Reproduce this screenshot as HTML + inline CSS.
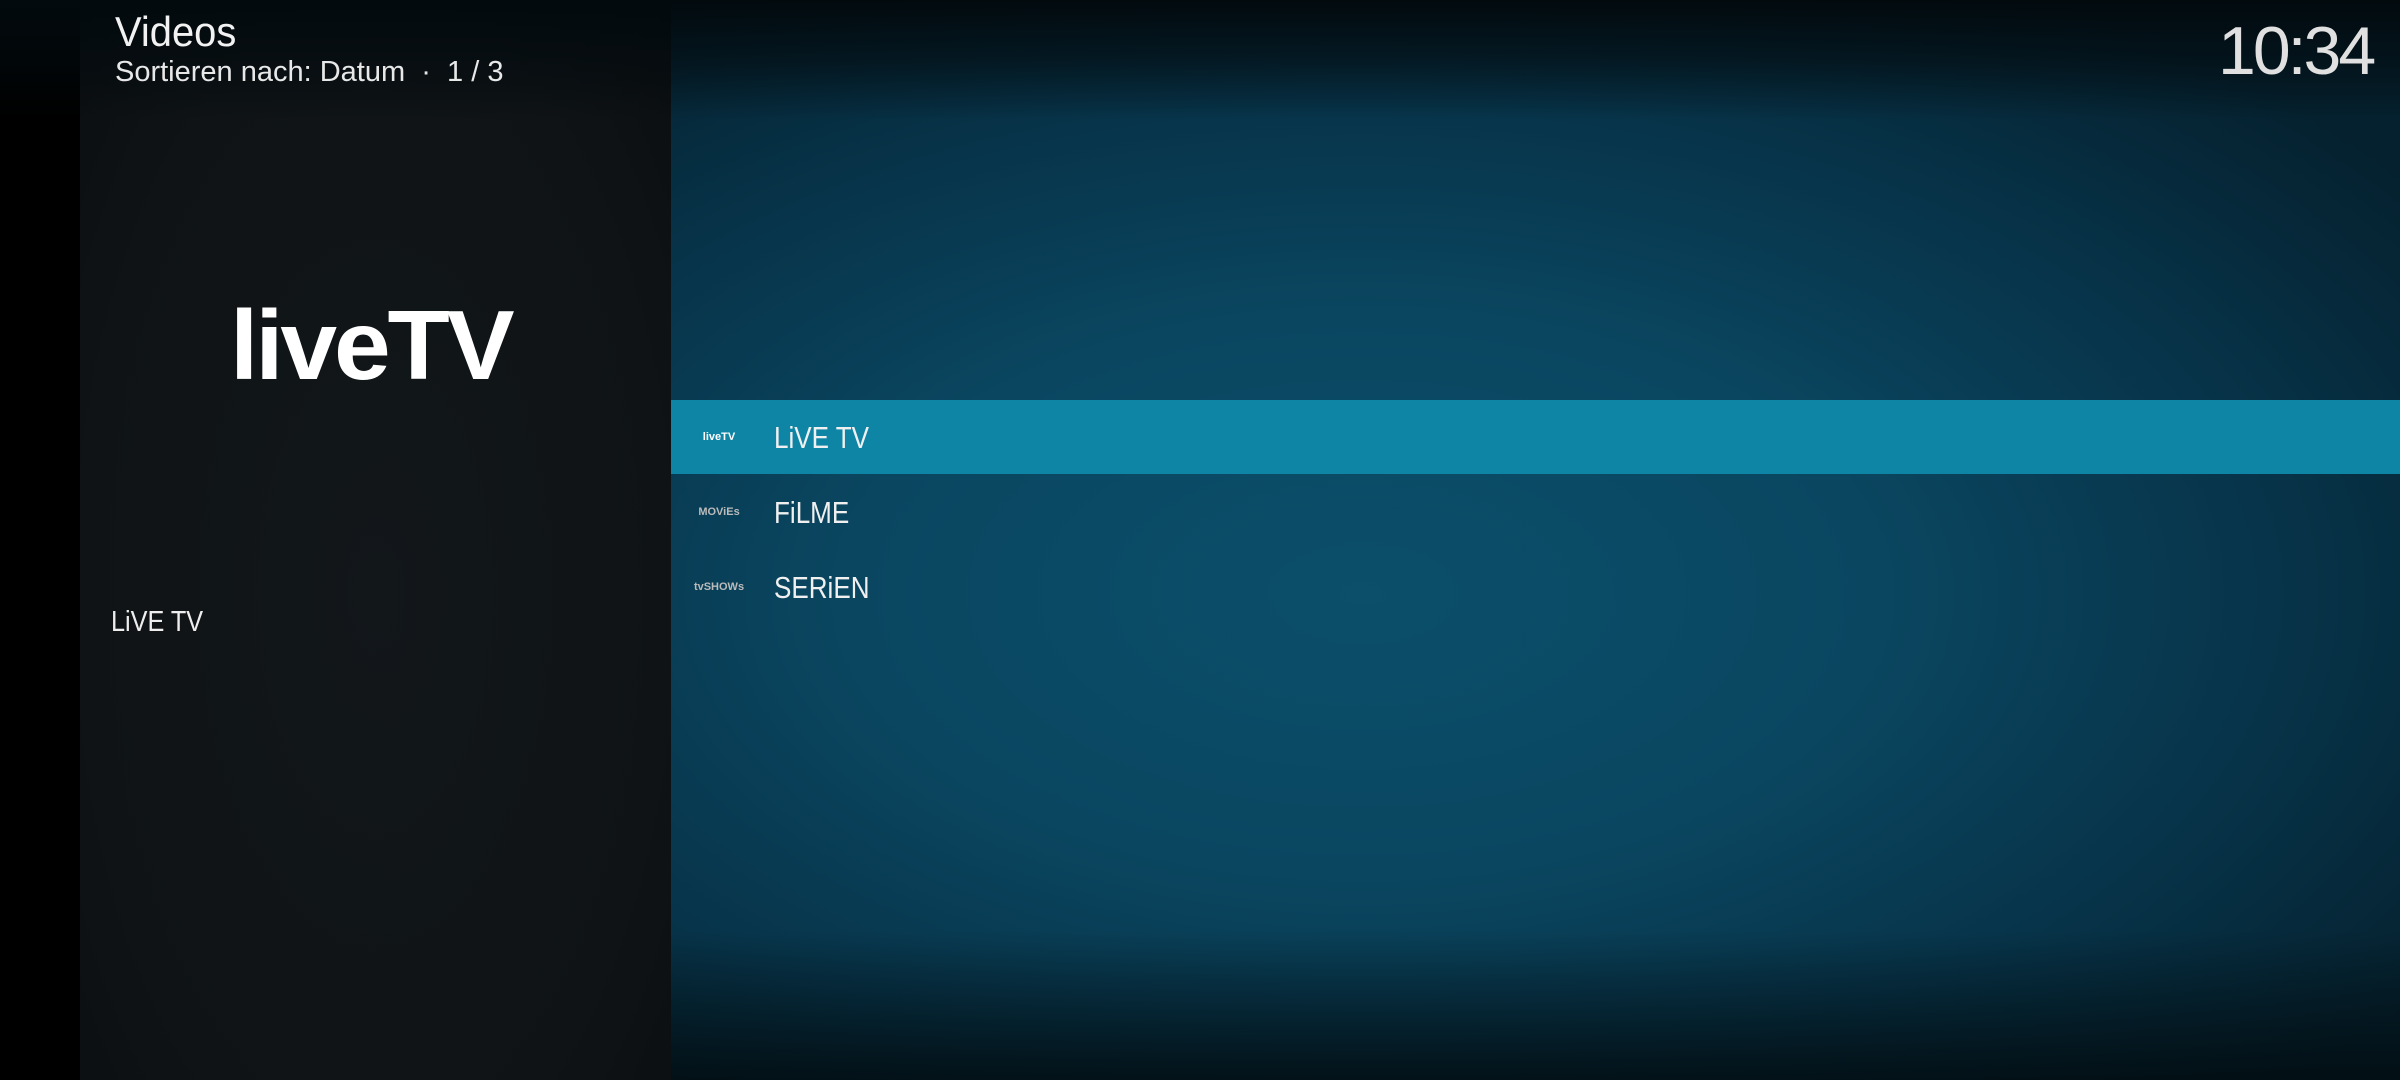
<!DOCTYPE html>
<html><head><meta charset="utf-8"><style>
html,body{margin:0;padding:0;width:2400px;height:1080px;overflow:hidden;background:#000;font-family:"Liberation Sans",sans-serif;color:#fff}
.main{position:absolute;left:671px;top:0;width:1729px;height:1080px;
background:radial-gradient(ellipse 75% 65% at 40% 55%,#0b4f6b 0%,#0a4660 40%,#07344a 70%,#05212f 100%);}
.topfade{position:absolute;left:0;top:0;width:2400px;height:120px;background:linear-gradient(#020a0e 0%,rgba(2,10,14,0.6) 50%,rgba(2,10,14,0) 100%)}
.botfade{position:absolute;left:671px;top:930px;width:1729px;height:150px;background:linear-gradient(rgba(2,10,14,0),rgba(2,12,16,0.85))}
.side{position:absolute;left:80px;top:0;width:591px;height:1080px;background:radial-gradient(ellipse at 50% 55%,#12171a 0%,#0f1315 70%,#0b0e10 100%)}
.bar{position:absolute;left:671px;top:400px;width:1729px;height:74px;background:#0f85a6}
.row{position:absolute;left:774px;font-size:31px;line-height:31px;color:#f0f0f0;transform:scaleX(0.84);transform-origin:0 0}
.ico{position:absolute;font-weight:bold;font-size:11px;text-align:center;width:80px;left:679px}
</style></head><body>
<div class="main"></div>
<div class="side"></div>
<div class="botfade"></div>
<div class="topfade"></div>
<div style="position:absolute;left:115px;top:8px;font-size:42px;color:#f2f2f2;transform:scaleX(0.95);transform-origin:0 0">Videos</div>
<div style="position:absolute;left:115px;top:56px;font-size:29px;color:#e8e8e8">Sortieren nach: Datum &nbsp;·&nbsp; 1 / 3</div>
<div style="position:absolute;left:2218px;top:12px;font-size:68px;letter-spacing:-3px;color:#e0e0e0">10:34</div>
<div style="position:absolute;left:230px;top:290px;font-size:98px;font-weight:bold;letter-spacing:-3px;line-height:110px;transform:scaleX(1.04);transform-origin:0 0">liveTV</div>
<div style="position:absolute;left:111px;top:606px;font-size:29px;color:#eee;transform:scaleX(0.87);transform-origin:0 0">LiVE TV</div>
<div class="bar"></div>
<div class="ico" style="top:431px;color:#fff">liveTV</div>
<div class="ico" style="top:506px;color:#bbb">MOViEs</div>
<div class="ico" style="top:581px;color:#bbb">tvSHOWs</div>
<div class="row" style="top:422px">LiVE TV</div>
<div class="row" style="top:497px">FiLME</div>
<div class="row" style="top:572px">SERiEN</div>
</body></html>
